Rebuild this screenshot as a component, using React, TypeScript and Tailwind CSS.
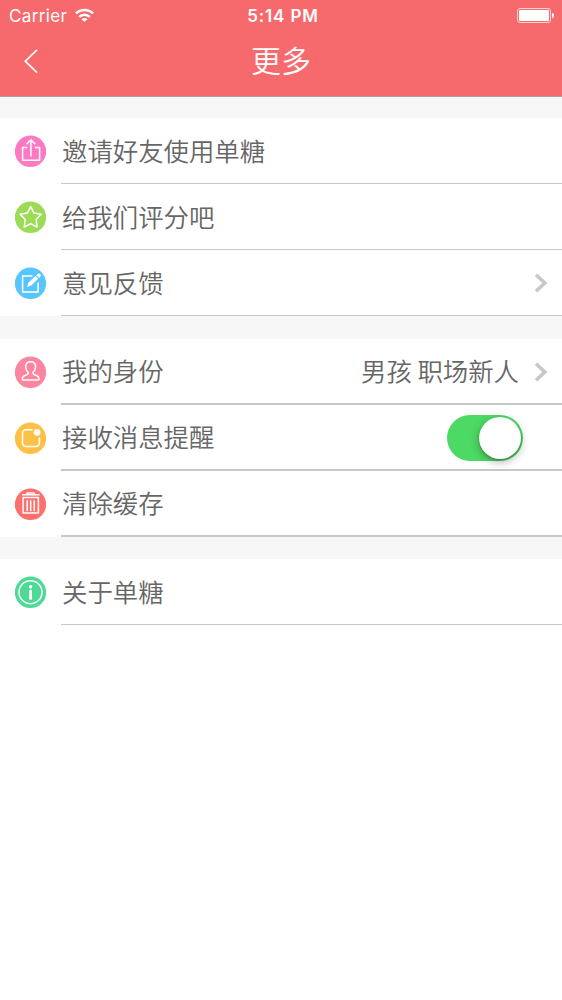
import React from "react";

type RowItem = {
    key: string;
    label: string;
    icon: React.ReactNode;
    color: string;
    value?: string;
    arrow?: boolean;
    toggle?: boolean;
};

type Group = {
    key: string;
    gap: string;
    line: string;
    items: RowItem[];
};

const IconShare = () => (
    <>
        <path d="M12.3 11.9H7.6v12.8h17V11.9h-4.700" />
        <path d="M15.900 21V4.600M11.500 8.800l4.400-4.400 4.400 4.400" />
    </>
);

const IconStar = () => (
    <path d="M15.700 5.200l3.300 6.400 7.100 1.200-5 5.200 1 7.600-6.400-3.400-6.500 3.400 1-7.600-5-5.200 7.200-1.200z" />
);

const IconEdit = () => (
    <>
        <path d="M17.500 8.600H7.600v16h15.500V15" />
        <path d="M12.100 19.400l1.300-4.200 7-6.600 2.700 2.700-6.900 6.800z" fill="white" stroke="none" />
        <path d="M21.300 7.800l1.200-1.200a1.900 1.900 0 0 1 2.700 2.700L24 10.500z" fill="white" stroke="none" />
    </>
);

const IconUser = () => (
    <path d="M15.500 5.200c-3 0-4.800 2.200-4.800 5 0 2.600 1.100 4.400 2.500 5.700.3 1.400-.3 2-2 2.600-2.500.8-4 1.800-4 4 0 .7.5 1 1.200 1h14.500c.7 0 1.200-.3 1.200-1 0-2.200-1.500-3.200-4-4-1.700-.6-2.300-1.200-2-2.600 1.400-1.300 2.500-3.100 2.500-5.700 0-2.800-1.900-5-5.100-5z" />
);

const IconNotice = () => (
    <>
        <path d="M17.500 7.200H11a3.500 3.500 0 0 0-3.500 3.500v9.900A3.500 3.500 0 0 0 11 24.100h9.900a3.500 3.500 0 0 0 3.500-3.500V15" />
        <circle cx="22.100" cy="9.800" r="3.400" fill="white" stroke="none" />
    </>
);

const IconTrash = () => (
    <>
        <path d="M7 6.300h17.500M12 5.900V4.500h7.200v1.400" />
        <path d="M8.100 9.100h15.300v15.500H8.100z" />
        <path d="M12.200 11.800v11M15.700 11.800v11M19.200 11.800v11" />
    </>
);

const IconInfo = () => (
    <>
        <circle cx="15.500" cy="15.700" r="11.500" />
        <circle cx="15.600" cy="10.200" r="1.700" fill="white" stroke="none" />
        <path d="M15.600 14.500v7.600" strokeWidth="2.800" strokeLinecap="round" />
    </>
);

const groups: Group[] = [
    {
        key: "share",
        gap: "h-[21px]",
        line: "border-b",
        items: [
            { key: "invite", label: "邀请好友使用单糖", icon: <IconShare />, color: "#fe79c4" },
            { key: "rate", label: "给我们评分吧", icon: <IconStar />, color: "#9ddb56" },
            { key: "feedback", label: "意见反馈", icon: <IconEdit />, color: "#59c5fd", arrow: true },
        ],
    },
    {
        key: "settings",
        gap: "h-[23px]",
        line: "border-b-2",
        items: [
            { key: "identity", label: "我的身份", icon: <IconUser />, color: "#fe859f", value: "男孩 职场新人", arrow: true },
            { key: "notice", label: "接收消息提醒", icon: <IconNotice />, color: "#ffc048", toggle: true },
            { key: "cache", label: "清除缓存", icon: <IconTrash />, color: "#fe706e" },
        ],
    },
    {
        key: "about",
        gap: "h-[22px]",
        line: "border-b",
        items: [{ key: "about", label: "关于单糖", icon: <IconInfo />, color: "#4cda96" }],
    },
];

function StatusBar() {
    return (
        <div className="grid h-8 grid-cols-3 items-center font-['Inter',sans-serif] text-[17px]">
            <div className="flex items-center pl-[9px]">
                <span className="pt-px tracking-[0.350px]">Carrier</span>
                <svg width="19" height="14" viewBox="0 0 19 14" className="ml-2 -mt-0.5" fill="none" stroke="white" strokeWidth="2.500">
                    <path d="M.9 5.400a12.300 12.300 0 0 1 17.200 0" />
                    <path d="M4.200 8.900a7.500 7.500 0 0 1 10.600 0" />
                    <path d="M6.500 11.300a4.200 4.200 0 0 1 6 0L9.500 14z" fill="white" stroke="none" />
                </svg>
            </div>
            <div className="pt-px pl-1 text-center font-semibold tracking-[0.850px]">5:14 PM</div>
            <div className="flex items-center justify-end pr-2">
                <div className="-mt-px h-[15px] w-[34px] rounded-[3px] border border-white/70 p-px">
                    <div className="h-full w-full rounded-[1px] bg-white" />
                </div>
                <div className="-mt-px ml-px h-[5px] w-0.5 rounded-r-full bg-white" />
            </div>
        </div>
    );
}

function Header() {
    return (
        <header className="h-[97px] border-b border-[#a9a5a5] bg-[#f6696c] text-white">
            <StatusBar />
            <div className="grid h-[58px] grid-cols-[60px_1fr_60px] items-center">
                <button aria-label="返回" className="pl-6">
                    <svg width="14" height="24" viewBox="0 0 14 24" fill="none" stroke="white" strokeWidth="1.700">
                        <path d="M13 .8 1.300 12.200 13 23.600" />
                    </svg>
                </button>
                <h1 className="-mt-1 text-center text-[30px] font-[350] leading-none">更多</h1>
            </div>
        </header>
    );
}

const Arrow = () => (
    <svg width="14" height="20" viewBox="0 0 14 20" fill="none" stroke="#c7c7cc" strokeWidth="3.600">
        <path d="M2 1.800 10.800 10 2 18.200" />
    </svg>
);

const Toggle = () => (
    <button role="switch" aria-checked="true" aria-label="接收消息提醒" className="mt-0.5 mr-[39px] flex h-[46px] w-[76px] items-center justify-end rounded-full bg-[#4cd964] pr-0.5">
        <span className="h-[42px] w-[42px] rounded-full bg-white shadow-[0_3px_8px_rgba(0,0,0,0.3),0_1px_2px_rgba(0,0,0,0.2)]" />
    </button>
);

function Row({ item, line }: { item: RowItem; line: string }) {
    return (
        <div className="flex h-[66px] pl-[15px]">
            <svg width="31" height="32" viewBox="0 0 31 32" fill="none" stroke="white" strokeWidth="1.500" strokeLinejoin="round" className="mt-[17px] mr-[15px] flex-none">
                <ellipse cx="15.500" cy="16.300" rx="15.700" ry="15.700" fill={item.color} stroke="none" />
                <g transform="translate(0 .5)">{item.icon}</g>
            </svg>
            <div className={`flex flex-1 items-center border-[#c8c7cc] pl-px ${line}`}>
                <span className="flex-1">{item.label}</span>
                {item.value && <span className="mr-[15px]">{item.value}</span>}
                {item.toggle && <Toggle />}
                {item.arrow && (
                    <span className="mt-px mr-3.5">
                        <Arrow />
                    </span>
                )}
            </div>
        </div>
    );
}

export default function App() {
    return (
        <div className="min-h-screen w-full bg-white font-['Noto_Sans_CJK_SC',sans-serif]">
            <Header />
            <main className="text-[25.400px] font-[350] leading-none text-[#666]">
                {groups.map((group) => (
                    <section key={group.key}>
                        <div className={`bg-[#f7f7f7] ${group.gap}`} />
                        {group.items.map((item) => (
                            <Row key={item.key} item={item} line={group.line} />
                        ))}
                    </section>
                ))}
            </main>
        </div>
    );
}
